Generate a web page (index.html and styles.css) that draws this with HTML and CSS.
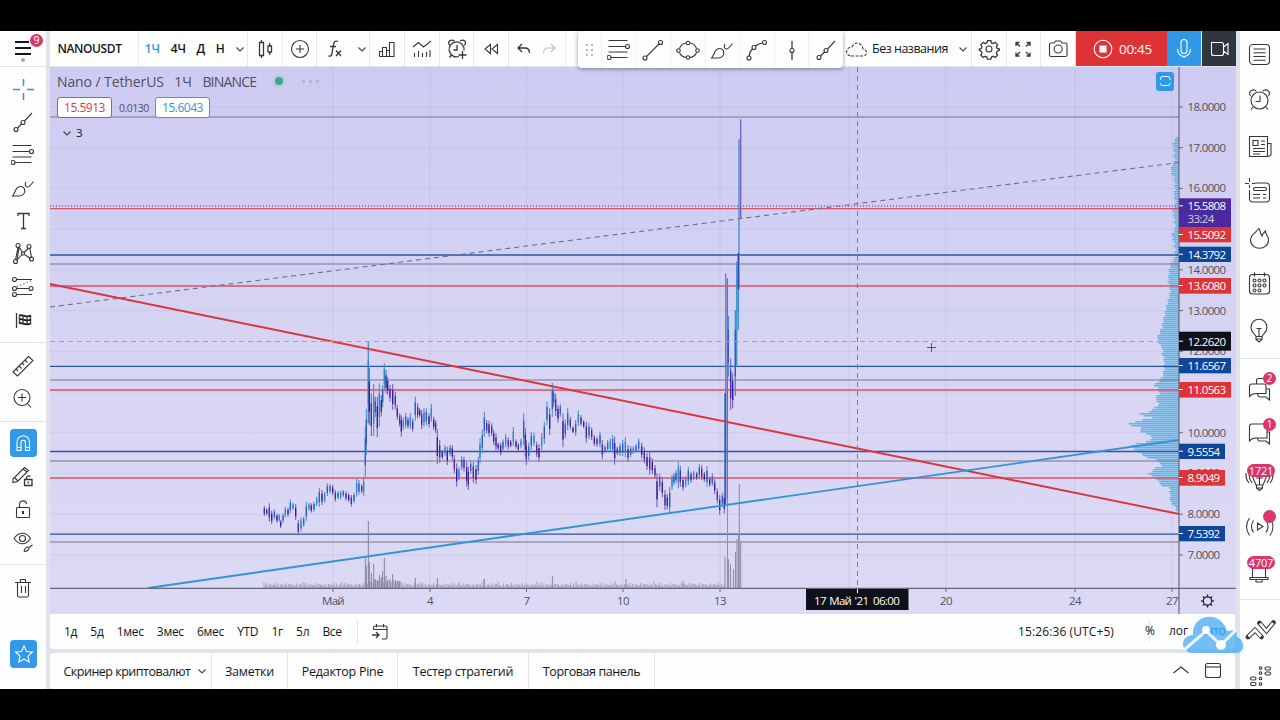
FILE: index.html
```
<!DOCTYPE html>
<html lang="ru">
<head>
  <meta charset="utf-8">
  <title>NANOUSDT</title>
  <link rel="stylesheet" href="styles.css">
</head>
<body>
  <svg class="defs">
    <symbol id="chev" viewBox="0 0 10 10"><path d="M1.5 3.5 5 7l3.5-3.5"/></symbol>
    <symbol id="fib" viewBox="0 0 24 24"><path d="M1.500 2.500h19M1.500 8.500h17M1.500 14h19M4 19.500h16.500"/><circle cx="20.500" cy="8.500" r="2"/><circle cx="2" cy="19.500" r="2"/></symbol>
    <symbol id="ray" viewBox="0 0 24 24"><path d="M6.500 18 10.500 14M13.500 11 21 3"/><circle cx="5" cy="19.500" r="2"/><circle cx="12" cy="12.500" r="2"/></symbol>
    <symbol id="brush" viewBox="0 0 24 24"><path d="M1.500 20C3.500 17.500 4 15.500 5 13.500c2-4 7-4 8.500-.5 1 3.500-1 7-5 7zM15 6c-1.500 2.500-.5 5.500 2 5 1.500-.3 3.500-3 5.500-5.500"/></symbol>
  </svg>

  <div class="app">
    <nav class="left">
      <div class="menu">
        <svg class="ic" viewBox="0 0 24 24"><path class="thick" d="M4 6h14M4 12h16M4 18h16"/></svg>
        <i class="dot"></i><b class="badge">9</b>
      </div>
      <div class="tools">
        <svg class="ic cyan" viewBox="0 0 24 24"><path d="M12.500 2v7M12.500 16v7M2 12.500h7M16 12.500h7"/></svg>
        <svg class="ic"><use href="#ray"/></svg>
        <svg class="ic"><use href="#fib"/></svg>
        <svg class="ic"><use href="#brush"/></svg>
        <svg class="ic" viewBox="0 0 24 24"><path class="med" d="M7 7V4.500h11V7M12.500 4.500v15M10 19.500h5"/></svg>
        <svg class="ic" viewBox="0 0 24 24"><path d="M7 5.500 4.500 18M8.500 5.500l3 5M18 6l-5 4.500M19 7l1.500 9M5.500 18.500 11 12.500M13.500 12.500l6 4M8 6l-2 12"/><circle cx="7" cy="3.500" r="2"/><circle cx="18" cy="4.500" r="2"/><circle cx="4.500" cy="19.500" r="2"/><circle cx="20.500" cy="17" r="2"/><circle cx="12" cy="11.500" r="1.500"/></svg>
        <svg class="ic" viewBox="0 0 24 24"><path d="M5.500 4.500H21M5.500 13.500H18M5.500 19.500H21"/><path stroke-dasharray="1 2.500" d="M6 11.500 20 6"/><circle cx="3.500" cy="4.500" r="2"/><circle cx="3.500" cy="13.500" r="2"/><circle cx="20" cy="13.500" r="2"/><circle cx="3.500" cy="19.500" r="2"/></svg>
        <svg class="ic" viewBox="0 0 24 24"><path class="med" d="M5.500 5V20"/><path class="thick" d="M8 7.500c3-2 6 3 12 0M8 11.500c3-2 6 3 12 0M8 15.500c3-2 6 3 12 0"/><path class="med" d="M8.500 7v9M19.500 7v9M12 7v8.500M16 8v8"/></svg>
      </div>
      <div class="tools">
        <svg class="ic" viewBox="0 0 24 24"><path d="M2 18 17.500 2.500l4.500 4L6.500 22zM5 15l2 2M8 12l2.500 2.500M11 9l2 2M14 6l2.500 2.500"/></svg>
        <svg class="ic" viewBox="0 0 24 24"><circle cx="11" cy="10.500" r="8"/><path d="M7 10.500h8M11 6.500v8M16.500 16.500 20 20.500"/></svg>
      </div>
      <div class="tools">
        <div class="on"><svg class="ic" viewBox="0 0 24 24"><path d="M6 19.500v-8c0-9 12.500-9 12.500 0v8h-4v-8c0-3-4.500-3-4.500 0v8zM6 16.500h4M14.500 16.500h4"/></svg></div>
        <svg class="ic" viewBox="0 0 24 24"><path d="M2 15 13.500 3.500l4 3L6.500 17.500 2 18.500zM12 5l4 3M4 14l3 3"/><path class="med" d="M13.500 15.500h7.500v6h-7.500zM15.500 15.500v-2c0-2 3.500-2 3.500-.5M17.300 17.500v2"/></svg>
        <svg class="ic" viewBox="0 0 24 24"><rect x="5.500" y="10.500" width="13" height="10" rx="1"/><path d="M8.500 10.500v-3c0-5 7-4.500 7-.5"/><path class="thick" d="M12 14v3"/></svg>
        <svg class="ic" viewBox="0 0 24 24"><path d="M3 8.500c5-7 12-7 16.500 0-4.500 7-11.500 7-16.500 0zM13 21.500c1-4 3-5 5-4 0 3-2 4-5 4M18.500 17l3-2"/><circle cx="11.500" cy="8.500" r="3"/></svg>
      </div>
      <div class="tools">
        <svg class="ic" viewBox="0 0 24 24"><path d="M4 6.500h16M6.500 6.500v13c0 1 .5 1.500 1.500 1.500h8c1 0 1.500-.5 1.500-1.500v-13M9.500 6V3.500h5V6M10.500 10v7M14.500 10v7"/></svg>
      </div>
      <div class="on fav"><svg class="ic" viewBox="0 0 24 24"><path d="m12 4 2.500 5.500 6 .7-4.500 4 1.200 6L12 17l-5.200 3.200 1.200-6-4.500-4 6-.7z"/></svg></div>
    </nav>

    <main>
      <header class="top">
        <div class="cell sym">NANOUSDT</div>
        <div class="cell tf"><span class="cur">1Ч</span><span>4Ч</span><span>Д</span><span>Н</span><svg class="ch"><use href="#chev"/></svg></div>
        <div class="cell"><svg class="ic" viewBox="0 0 24 24"><path class="med" d="M6.500 5.500h4v13h-4zM8.500 3v2.500M8.500 18.500V21M15 9h3.500v6H15zM16.700 6v3M16.700 15v3"/></svg></div>
        <div class="cell"><svg class="ic" viewBox="0 0 24 24"><circle cx="12" cy="12" r="8.500"/><path d="M8 12h8M12 8v8"/></svg></div>
        <div class="cell fx"><svg class="ic" viewBox="0 0 24 24"><path class="med" d="M15 4.500c-3-1-4 0-4.500 3l-1.500 9c-.5 2.500-1.500 3-3.500 2.500M7 9.500h6M13 13.500l5 5.500M18 13.500l-5 5.500"/></svg><svg class="ch"><use href="#chev"/></svg></div>
        <div class="cell"><svg class="ic" viewBox="0 0 24 24"><path d="M4.500 19.500v-5h3v5M7.500 19.500v-9h4v9M11.500 13.500h3v6M14.500 19.500V5.500h4.500v14H4.500"/></svg></div>
        <div class="cell"><svg class="ic" viewBox="0 0 24 24"><path d="M3 10 8.500 5.500l5 4.500L21 4M4.500 20v-4M8.500 20v-6M12.500 20v-4M16.500 20v-5M20 20v-7"/></svg></div>
        <div class="cell"><svg class="ic" viewBox="0 0 24 24"><path class="med" d="M14 19.500a7.500 7.500 0 1 1 5-6M4.500 8.500c-2.500-5 2-6.500 5-4.500M15 4c3-2 7.500 0 4.500 4.500M12 8v5H8.500M6.500 18l-2 2.500M17.500 14v8M13.500 18h8"/></svg></div>
        <div class="cell"><svg class="ic" viewBox="0 0 24 24"><path d="M11.500 7.500v9L6 12zM18.500 7.500v9L13 12z"/></svg></div>
        <div class="cell undo"><svg class="ic" viewBox="0 0 24 24"><path class="med" d="m10 7-4 4 4 4M6 11h7c3 0 4.500 2 4.500 5"/></svg><svg class="ic dim" viewBox="0 0 24 24"><path d="m14 7 4 4-4 4M18 11h-7c-3 0-4.500 2-4.500 5"/></svg></div>
        <div class="gap"></div>
        <div class="cell cloud"><svg class="ic" viewBox="0 0 24 24"><path stroke-dasharray="3 1.500" d="M6 19h13c4-1 3-7-1-7-1-7-9-8-11-2C1 10-1 18 6 19z"/></svg><span>Без названия</span><svg class="ch"><use href="#chev"/></svg></div>
        <div class="cell"><svg class="ic" viewBox="0 0 24 24"><circle cx="12" cy="12" r="3"/><path class="med" d="M10.300 3.500h3.400l.6 2.300 1.700.7 2-1.200 2.400 2.400-1.200 2 .7 1.700 2.300.6v1l-2.300 1.300-.7 1.700 1.200 2-2.400 2.300-2-1.100-1.700.7-.6 2.200h-3.400l-.6-2.200-1.700-.7-2 1.100L3.600 18l1.200-2-.7-1.700-2-1.300v-1l2-.6.7-1.700-1.200-2L6 5.300l2 1.200 1.700-.7z" transform="translate(.2 .1)"/></svg></div>
        <div class="cell"><svg class="ic" viewBox="0 0 24 24"><path class="med" d="M5 9V5.500h3.500M5 5.500l4 4M15.500 5.500H19V9M19 5.500l-4 4M5 15.500V19h3.500M5 19l4-4M15.500 19H19v-3.500M19 19l-4-4"/></svg></div>
        <div class="cell"><svg class="ic" viewBox="0 0 24 24"><path d="M3.500 7.500c0-1 .5-1.500 1.500-1.500h3l1.500-2h5L16 6h3.500c1 0 1.500.5 1.500 1.500V18c0 1-.5 1.500-1.500 1.500H5c-1 0-1.500-.5-1.500-1.500z"/><circle cx="12.200" cy="12" r="4"/></svg></div>
        <div class="rec"><svg class="ic" viewBox="0 0 24 24"><circle cx="12" cy="12" r="8.800"/><rect class="solid" x="9" y="9" width="6" height="6"/></svg><span>00:45</span></div>
        <div class="mic"><svg class="ic" viewBox="0 0 24 24"><rect x="9" y="2.500" width="6" height="14" rx="3"/><path d="M5.500 12c0 10 13 10 13 0M12 19.500V21"/></svg></div>
        <div class="cam"><svg class="ic" viewBox="0 0 24 24"><path d="M4.500 5.500h10c1.500 0 2 .5 2 2v9c0 1.500-.5 2-2 2h-8c-1.500 0-2-.5-2-2zM16.500 10l4.500-3.500v11L16.500 14"/></svg></div>

        <div class="float">
          <div class="grip"><i></i><i></i><i></i><i></i><i></i><i></i></div>
          <div><svg class="ic"><use href="#fib"/></svg></div>
          <div><svg class="ic" viewBox="0 0 24 24"><path d="M5.500 18.500 18.500 5.500"/><circle cx="4" cy="20" r="2"/><circle cx="19.500" cy="4.500" r="2"/></svg></div>
          <div><svg class="ic" viewBox="0 0 24 24"><path d="M3.500 10.500C4.500 7.500 7 5.500 10 5M14 5c3 .5 5.500 2.500 6.500 5.500M3.500 14.500c1 3 3.500 4.500 6.500 5M14 19.500c3-.5 5.500-2 6.500-5"/><circle cx="12" cy="5" r="1.800"/><circle cx="12" cy="19.500" r="1.800"/><circle cx="2.500" cy="12.500" r="1.800"/><circle cx="21.500" cy="12.500" r="1.800"/></svg></div>
          <div><svg class="ic"><use href="#brush"/></svg></div>
          <div><svg class="ic" viewBox="0 0 24 24"><path d="M4.200 18c.2-3 1-5 3.300-7M10.500 8c2-1.500 4-2.500 7-3"/><circle cx="4" cy="20" r="2"/><circle cx="9" cy="9.500" r="2"/><circle cx="19.500" cy="4.500" r="2"/></svg></div>
          <div><svg class="ic" viewBox="0 0 24 24"><path class="med" d="M12 3v7.500M12 14.500V22"/><circle cx="12" cy="12.500" r="2"/></svg></div>
          <div><svg class="ic"><use href="#ray"/></svg></div>
        </div>
      </header>

      <section class="chart">
        <svg id="plot" width="1186" height="547" viewBox="50 67 1186 547"></svg>
        <div class="legend">
          <div class="name"><span>Nano / TetherUS</span><span>1Ч</span><span class="exch">BINANCE</span><i class="live"></i><em><i></i><i></i><i></i></em></div>
          <div class="quote"><span class="bid">15.5913</span><small>0.0130</small><span class="ask">15.6043</span></div>
          <div class="fold"><svg class="ch"><use href="#chev"/></svg>3</div>
        </div>
        <div class="max"><svg viewBox="0 0 18 18"><path d="M4.500 8V6.500q0-2 2-2h5.500q2 0 2 2V8M14 11v.500q0 2-2 2H6.500q-2 0-2-2V11"/></svg></div>
      </section>

      <div class="range">
        <div class="spans"><span>1д</span><span>5д</span><span>1мес</span><span>3мес</span><span>6мес</span><span>YTD</span><span>1г</span><span>5л</span><span>Все</span></div>
        <div class="goto"><svg class="ic" viewBox="0 0 24 24"><path d="M5.500 9.500v-2c0-1 .5-1.500 1.500-1.500h10.500c1 0 1.500.5 1.500 1.500v10c0 1-.5 1.500-1.500 1.500H14M5.500 9.500h13.500M8.500 4v3.500M15.500 4v3.500"/><path class="med" d="M4 15h6.500M8 12l3 3-3 3"/></svg></div>
        <div class="clock">15:26:36 (UTC+5)</div>
        <div class="scale"><span>%</span><span>лог</span><span class="auto">авто</span></div>
      </div>

      <footer class="tabs">
        <div class="tab t1">Скринер криптовалют<svg class="ch"><use href="#chev"/></svg></div>
        <div class="tab t2">Заметки</div>
        <div class="tab t3">Редактор Pine</div>
        <div class="tab t4">Тестер стратегий</div>
        <div class="tab t5">Торговая панель</div>
        <div class="win">
          <svg class="ic" viewBox="0 0 24 24"><path d="m4.500 14 7.500-6 7.500 6"/></svg>
          <svg class="ic" viewBox="0 0 24 24"><rect x="4.500" y="4.500" width="15" height="14" rx="2"/><path d="M4.500 8h15"/></svg>
        </div>
      </footer>
    </main>

    <aside class="right">
      <div class="grp">
        <div><svg class="ic" viewBox="0 0 24 24"><rect x="2.500" y="1.500" width="20" height="20" rx="3.500"/><path d="M6.500 6h12M6.500 9.800h12M6.500 13.500h12M6.500 17.200h12"/></svg></div>
        <div><svg class="ic up" viewBox="0 0 24 24"><circle cx="12.500" cy="13.500" r="8.500"/><path d="M13 8.500v6H8.500M3.500 9c-3-5 3-8 6-4.500M15.500 4.500c3-3.500 9-.5 6 4.500M6 20l-2 2.500M19 20l2 2.500"/></svg></div>
        <div><svg class="ic" viewBox="0 0 24 24"><path d="M2.500 1.500h18v20h-18zM20.500 8.500H24V19.500q-1 2-3.500 2M6 5.500h5v5H6zM14 6h4M14 9.500h4M6 13.500h12M6 16.500h12M6 19h7"/></svg></div>
        <div><svg class="ic" viewBox="0 0 24 24"><path d="M8 2h11q3.500 0 3.500 3.500v12q0 3.500-3.500 3.500H6q-3.500 0-3.500-3.500V9M-2 2.500h4M5 2.500h3M2.500 -3v4M2.500 4v3M6 13.500h7M16 13.500h3M6 17h7M16 17h3"/><rect x="6.500" y="6.500" width="13" height="3" rx="1.500"/></svg></div>
        <div><svg class="ic" viewBox="0 0 24 24"><path d="M12 1.500c1.500 2 1 5 3 7.500.5-2 1-3 3.500-5-.5 3 3 5 3 9 0 11-18 11-18 0C3.500 7.500 9 5.500 12 1.500z"/></svg></div>
        <div><svg class="ic" viewBox="0 0 24 24"><rect x="2.500" y="1.500" width="20" height="19.500" rx="3"/><path class="med" d="M7.500-.5v4M17.500-.5v4"/><circle cx="7.500" cy="7.500" r="1.500"/><circle cx="12.500" cy="7.500" r="1.500"/><circle cx="17.500" cy="7.500" r="1.500"/><circle cx="7.500" cy="12.500" r="1.500"/><circle cx="12.500" cy="12.500" r="1.500"/><circle cx="17.500" cy="12.500" r="1.500"/><circle cx="7.500" cy="17.500" r="1.500"/><circle cx="12.500" cy="17.500" r="1.500"/></svg></div>
        <div><svg class="ic" viewBox="0 0 24 24"><path d="M9 17.500c-1-3-5-4-5-9 0-11 16-11 16 0 0 5-4 6-5 9zM9 17.500v3l3 2.500 3-2.500v-3M9 20h6M12 17.500v-8M9.500 9.500h5"/></svg></div>
      </div>
      <div class="grp">
        <div><svg class="ic" viewBox="0 0 24 24"><path d="M9.500 8V4.500q0-2 2-2H18M5 8h12q2 0 2 2v7.500H9q-4 0-6.500 3V10q0-2 2.500-2zM19.500 13h3v11l-3.500-3h-6q-2 0-2.500-3"/></svg><b class="badge">2</b></div>
        <div><svg class="ic" viewBox="0 0 24 24"><path d="M5 2h13q2 0 2 2v12H9q-4 0-6.500 3V4.500Q2.500 2 5 2zM20 10h2.500v12L19 19h-6q-2 0-2.500-2.500"/></svg><b class="badge">1</b></div>
        <div><svg class="ic" viewBox="0 0 24 24"><path d="M5 4c0 6 3 10 4 13h7c1-3 4-7 4-13M9.500 17v3l3 2.500 3-2.500v-3M9.500 20h6M12.500 17V5M9 10h7M2 6q0 5 3 9M-1 5q-.5 6 3 10M23 6q0 5-3 9M26 5q.5 6-3 10"/></svg><b class="badge wide">1721</b></div>
        <div><svg class="ic" viewBox="0 0 24 24"><path d="M10.500 9v7l5.500-3.500zM6.500 6.500q-4 6 0 12M2.500 4q-6 8.500 0 17.500M19 6.500q4 6 0 12M23 4q6 8.500 0 17.500"/></svg><b class="badge blank"></b></div>
        <div><svg class="ic" viewBox="0 0 24 24"><path d="M5.500 4v13.500h13V4M3 17.500h18v2H3zM9 19.500v2.500h6v-2.500"/></svg><b class="badge wide">4707</b></div>
      </div>
      <div class="grp">
        <div><svg class="ic" viewBox="0 0 24 24"><path class="rim" d="m1 20 7-7 6.500 7M12.500 6l7 8 7-8.500"/><path class="core" d="m1.500 19.500 6.500-6.500 6 6.500M13 6.500l6.500 7.500 6.500-8"/></svg></div>
        <div><svg class="ic" viewBox="0 0 24 24"><rect x="3.500" y="14" width="5.500" height="3" rx="1.500"/><rect x="3.500" y="19.500" width="5.500" height="3" rx="1.500"/><rect x="18" y="4" width="5.500" height="3" rx="1.500"/><rect x="18" y="9" width="5.500" height="3" rx="1.500"/><circle cx="13.500" cy="5" r="1.300"/><circle cx="13.500" cy="10" r="1.300"/><circle cx="13.500" cy="15.500" r="1.300"/><circle cx="13.500" cy="21" r="1.300"/></svg></div>
      </div>
    </aside>
    <svg class="mark" viewBox="0 0 62 38"><path class="puff" d="M12 37C-2 37-3 20 11 19 9-2 39-7 45 15l9-1 1 7c9 4 8 16-1 16z"/><path class="zig" d="M2 34 24 15l15 14L54 14"/><circle cx="24" cy="14" r="4"/><circle cx="39" cy="29" r="5"/></svg>
  </div>
  <script src="chart.js"></script>
</body>
</html>
```
FILE: styles.css
```
* { box-sizing: border-box; }
body {
  margin: 0;
  background: #000;
  font: 12.5px "Trebuchet MS", "Open Sans", "Noto Sans", sans-serif;
  color: #131722;
}
.defs { display: none; }

.app {
  position: relative;
  display: flex;
  width: 1280px; height: 720px;
  padding: 31px 0;
  overflow: hidden;
}
.app > * { height: 658px; }

.ic {
  width: 24px; height: 24px;
  flex: none;
  overflow: visible;
  fill: none;
  stroke: #34373e;
  stroke-width: 1.1;
}
.ch {
  width: 10px; height: 10px;
  flex: none;
  fill: none;
  stroke: #43464d;
  stroke-width: 1.1;
}
.med { stroke-width: 1.3; }
.thick { stroke-width: 1.8; stroke: #131722; }
.cyan { stroke: #2b9cc9; stroke-width: 1.5; }
.dim { stroke: #bbb; }
.solid { fill: #fff; }
.rim { stroke-width: 4.6; stroke-linecap: round; }
.core { stroke-width: 2.6; stroke: #fefefe; }

/* left tools */
.left {
  width: 46px;
  background: #fefefe;
}
.menu {
  position: relative;
  height: 36px;
  padding: 5px 11px;
  border-bottom: 1px solid #e0e3eb;
}
.dot {
  position: absolute;
  left: 21px; top: 27px;
  width: 4px; height: 4px;
  border-radius: 50%;
  background: #aaa;
}
.badge {
  position: absolute;
  top: 3px; right: 3px;
  min-width: 13px; height: 13px;
  padding: 0 3px;
  border-radius: 7px;
  background: #d9366b;
  color: #fff;
  font-weight: 400;
  font-size: 10.5px;
  line-height: 13px;
  text-align: center;
}
.tools {
  display: flex;
  flex-direction: column;
  align-items: center;
  gap: 9px;
  padding: 10px 0;
  border-bottom: 1px solid #e0e3eb;
}
.tools:nth-child(3) { padding-top: 11px; }
.tools:nth-child(4) { padding-top: 9px; }
.tools:nth-child(5) { padding-top: 11px; border: 0; }
.on {
  display: flex;
  justify-content: center;
  align-items: center;
  width: 27px; height: 28px;
  margin: -2px 0;
  border-radius: 4px;
  background: #3298e8;
}
.on .ic { stroke: #fff; }
.fav { margin: 30px 10px; }

/* middle column */
main {
  display: flex;
  flex-direction: column;
  width: 1194px;
  padding: 0 4px 0 4px;
  background: #e0e3eb;
}
.top {
  position: relative;
  display: flex;
  height: 36px;
  background: #e3e5eb;
}
.cell {
  display: flex;
  align-items: center;
  justify-content: center;
  width: 34.7px; height: 35px;
  border-right: 1px solid #e6e8ed;
  background: #fefefe;
}
.sym {
  width: 89px;
  padding-right: 9px;
  font-weight: 600;
  font-size: 12px;
  letter-spacing: -.4px;
}
.tf {
  width: 109px;
  gap: 10.5px;
  padding-left: 4px;
  font-weight: 600;
  font-size: 12px;
}
.cur { color: #3298d8; }
.fx { width: 53px; gap: 10px; padding-left: 3px; }
.undo { width: 57px; gap: 1px; padding-right: 2px; }
.gap { flex: 1; height: 35px; background: #fefefe; }
.cloud {
  width: 130px;
  gap: 3px;
  font-size: 12.5px;
  letter-spacing: -.5px;
}
.cloud .ch { margin-left: 7px; }
.rec, .mic, .cam {
  display: flex;
  align-items: center;
  justify-content: center;
  height: 35px;
  color: #fff;
}
.rec { width: 91px; gap: 4px; background: #de3336; font-size: 13.5px; letter-spacing: -.3px; }
.mic { width: 34px; background: #3298e8; }
.cam { width: 34px; margin-left: 1px; background: #2f3640; }
.rec .ic, .mic .ic, .cam .ic { stroke: #fff; }

.float {
  position: absolute;
  left: 528px; top: 0;
  z-index: 2;
  display: flex;
  width: 265px; height: 37px;
  border-radius: 4px;
  background: #fefefe;
  box-shadow: 0 1px 4px rgba(0, 0, 0, .4);
}
.float > div {
  display: flex;
  align-items: center;
  justify-content: center;
  width: 34.700px;
  border-left: 1px solid #f0f1f4;
}
.float .grip {
  width: 23px;
  flex-wrap: wrap;
  align-content: center;
  gap: 3px;
  padding: 0 7px;
  border: 0;
}
.grip i { width: 2px; height: 2px; background: #b5b8c0; }

.chart {
  position: relative;
  width: 1186px; height: 547px;
  background: linear-gradient(#cdcbf1, #d8d6f3 60%, #dbd9f4);
}
#plot { display: block; }
#plot text { font-size: 11.5px; letter-spacing: -.65px; word-spacing: 1px; fill: #50535e; }
#plot .lbl { fill: #fff; }
#plot .mid { text-anchor: middle; }
.legend {
  position: absolute;
  left: 7px; top: 4px;
}
.name {
  display: flex;
  align-items: center;
  gap: 10.5px;
  height: 20px;
  font-size: 14px;
  letter-spacing: -.1px;
  color: #50505f;
}
.exch { letter-spacing: -.8px; }
.live {
  width: 8px; height: 8px;
  margin-left: 8px;
  border-radius: 50%;
  background: #43a08c;
  box-shadow: 0 0 0 3px #b4cfe0;
}
.name em { display: flex; gap: 4px; margin-left: 9px; }
.name em i { width: 3px; height: 3px; border-radius: 50%; background: #b1afcb; }
.quote {
  display: flex;
  align-items: center;
  gap: 7px;
  margin-top: 6px;
}
.bid, .ask {
  width: 55px; height: 21px;
  border: 1px solid #d94a5a;
  border-radius: 3px;
  background: #fefefe;
  color: #d23c4a;
  font-size: 12px;
  letter-spacing: -.5px;
  line-height: 19px;
  text-align: center;
}
.ask { margin-left: -1px; border-color: #3c9be0; color: #3298d8; }
.quote small { width: 30px; font-size: 10.5px; letter-spacing: -.5px; color: #50535e; }
.fold {
  display: flex;
  align-items: center;
  gap: 4px;
  padding: 7px 0 0 5px;
  font-size: 11.5px;
}
.max {
  position: absolute;
  left: 1106px; top: 5px;
  width: 18px; height: 19px;
  border-radius: 3px;
  background: #3298e8;
}
.max svg { display: block; width: 18px; height: 18px; fill: none; stroke: #fff; }

.range {
  display: flex;
  align-items: center;
  height: 35px;
  margin-right: 1px;
  padding-left: 14px;
  border-radius: 0 0 3px 3px;
  background: #fefefe;
  font-size: 12px;
}
.spans { display: flex; gap: 13.2px; width: 293px; letter-spacing: -.3px; }
.goto {
  display: flex;
  padding-left: 10px;
  border-left: 1px solid #e0e3eb;
}
.clock { margin-left: auto; padding-right: 35px; letter-spacing: .1px; }
.scale {
  display: flex;
  gap: 13px;
  width: 86px; height: 21px;
  line-height: 20px;
  border-left: 1px solid #e0e3eb;
}
.scale span:first-child { margin-left: -5px; }
.scale span + span { margin-left: 1px; }
.scale .auto { margin-left: -1px; color: #0c62ad; letter-spacing: -.3px; }

.tabs {
  display: flex;
  height: 36px;
  margin: 4px 1px 0 0;
  border-radius: 3px;
  background: #fefefe;
  font-size: 12.5px;
  line-height: 35px;
  letter-spacing: -.25px;
  white-space: nowrap;
}
.tab {
  display: flex;
  align-items: center;
  justify-content: center;
  border-right: 1px solid #e0e3eb;
}
.t1 { width: 162px; gap: 7px; padding-left: 10px; letter-spacing: -.5px; }
.t2 { width: 76px; }
.t3 { width: 110px; }
.t4 { width: 131px; }
.t5 { width: 126px; letter-spacing: -.4px; }
.win { display: flex; align-items: center; gap: 8px; margin: 0 10px 0 auto; }

/* right widgets */
.right {
  width: 40px;
  padding-top: 1px;
  background: #fefefe;
}
.grp { padding-bottom: 4px; border-bottom: 1px solid #e0e3eb; }
.grp + .grp { padding-top: 6px; }
.grp div {
  position: relative;
  height: 46px;
  padding: 11px 0 0 7px;
}
.grp:last-child { border: 0; }
.grp .up { margin-top: -2px; }
.grp .badge { top: 7px; right: 4px; }
.grp .wide {
  top: 7px; right: 5px;
  width: 28px;
  padding: 0;
  font-size: 11px;
  letter-spacing: -.2px;
}
.grp .blank { top: 7px; }

.mark {
  position: absolute;
  left: 1182px; top: 616px;
  width: 62px; height: 38px;
}
.app > .mark { height: 38px; }
.puff { fill: #3fa5f2; fill-opacity: .72; }
.zig { fill: none; stroke: #fff; stroke-width: 3; stroke-opacity: .85; }
.mark circle { fill: #fff; }
```
FILE: chart.js
```
const plot = document.getElementById("plot");
const add = (tag, attrs, text) => {
  const el = document.createElementNS("http://www.w3.org/2000/svg", tag);
  for (const k in attrs) el.setAttribute(k, attrs[k]);
  if (text) el.textContent = text;
  plot.appendChild(el);
  return el;
};
const line = (x1, y1, x2, y2, stroke, w = 1, dash = "none") =>
  add("line", { x1, y1, x2, y2, stroke, "stroke-width": w, "stroke-dasharray": dash });

const RIGHT = 1179, BASE = 588;
const priceY = p => 107 + (18 - p) * 40.72;

// grid
for (let p = 7; p <= 18; p++) line(50, priceY(p), RIGHT, priceY(p), "rgba(175,130,185,.15)");
[333, 430, 526.5, 623, 720, 849, 946, 1075, 1172].forEach(x =>
  line(x, 67, x, BASE, "rgba(150,130,180,.15)"));

// volume by price: y, width
const profile = [
  [135,1],[140,5],[145,6],[150,5],[155,5],[160,4],[165,7],[171.5,8],[176.500,5],[187,4],[195,5],[203,4],
  [210,6],[217,5],[227,4],[235,7],[241,5],[248,4],[257,4],[263,8],[270,10],[280,11],[287,9],[293,9],
  [300,11],[307,13],[313,14],[320,16],[327,17],[333,20],[338,22],[343,20],[348,16],[353,17],[358,15],
  [363,15],[370,15],[377,17],[382,22],[385,25],[388,20],[393,20],[398,24],[403,20],[408,25],[411.500,32],
  [413.500,41],[417,28],[420,40],[423.500,53],[427,38],[430,40],[433,33],[437,26],[440,30],[444.500,48],
  [448,45],[452,40],[457,32],[460,20],[465,18],[468,25],[473,30],[477,25],[480,20],[484,20],[487,10],
  [493,9],[500,9],[505,5],[510,2]];
for (let y = 135, i = 0; y < 512; y += 2) {
  while (i < profile.length - 2 && profile[i + 1][0] < y) i++;
  const [a, wa] = profile[i], [b, wb] = profile[i + 1];
  const w = wa + (wb - wa) * (y - a) / (b - a) + ((y * 7) % 3 - 1) * .8;
  add("rect", { x: RIGHT - w, y, width: w, height: 1.5, fill: "#5fb5ea" });
  add("rect", { x: RIGHT - w * .8, y: y + 1.5, width: w * .8, height: .5, fill: "#8cc6ec" });
}

// levels
[117, 264, 380, 461, 542].forEach(y => line(50, y, RIGHT, y, "#77768f", 1.2));
[255, 366.3, 451.5, 534.2].forEach(y => line(50, y, RIGHT, y, "#2d55a5", 1.3));
[208.700, 286, 390, 478].forEach(y => line(50, y, RIGHT, y, "#dc5068", 1.3));
line(50, 206, RIGHT, 206, "#4b2a80", 1.2, "1 2");

// candles: x, high, low, each block in its own thirds-of-a-pixel frame
const blocks = [
  [250, 330, "43,528,558 50,535,555 58,520,575 65,542,582 73,538,568 81,550,578 88,552,575 92,570,594 99,550,578 106,530,562 114,533,560 121,508,550 129,518,540 137,522,570 145,570,616 153,562,605 161,560,590 169,516,572 177,518,542 184,520,548 192,515,545 200,500,528 208,474,530 216,480,525 224,485,518 232,460,498 240,462,490 248,465,495 256,480,515 264,483,508 272,482,508 280,480,500 288,484,512 296,490,516 304,495,530 312,488,520 320,446,500 327,450,495 335,462,490 341,440,498 346,290,440 349,236,375 355,36,280 358,115,285 364,190,318 371,162,318 376,200,262 382,200,322 388,160,290 394,195,260 398,165,232 403,100,180 408,120,190 413,140,195 420,165,215 428,162,240 436,185,238 442,225,270 449,250,290 454,255,320 460,262,300 467,248,295 474,262,295 481,250,298 488,265,305 496,200,272 503,220,265 509,235,262 515,240,298 522,235,290 529,235,285 537,250,292 544,222,275 551,260,300 557,270,308 562,298,402 569,330,398 577,360,388 585,345,378 592,350,405 600,345,378 607,345,390 613,375,430 620,400,470 627,410,450 635,378,420 642,380,425 650,395,470 655,410,480 662,392,432 670,395,458 678,405,462 685,380,435 690,325,400 697,300,370 703,245,320 710,270,310 717,272,320 725,280,318 731,300,345 738,310,360 745,340,358"],
  [470, 370, "85,218,240 92,218,256 99,208,244 107,192,232 115,202,238 122,210,232 130,172,228 138,208,236 145,220,244 153,205,235 161,130,225 166,175,258 169,210,286 176,218,270 184,185,240 192,188,228 200,215,262 207,222,275 215,190,240 223,155,222 231,95,165 239,115,195 247,38,140 251,55,110 257,72,138 264,105,158 271,102,140 279,130,232 286,148,205 293,115,180 301,140,178 309,168,190 317,150,198 325,122,168 333,135,168 341,150,175 349,155,218 357,158,208 365,172,210 373,195,228 381,200,230 390,185,232 397,210,268 405,225,250 413,210,245 421,205,245 428,195,250 434,200,284 442,230,255 450,220,258 458,210,258 466,202,262 474,225,276 482,228,262 490,228,252 498,222,248 506,205,245 515,218,265 523,232,280 531,250,300 539,245,315 547,265,312 555,285,325 561,310,412 569,310,362 577,322,382 585,360,420 592,372,418 599,350,430"],
  [630, 110, "126,1095,1140 132,1090,1125 138,1080,1120 145,1055,1135 151,1068,1130 159,1100,1142 167,1098,1132 175,1070,1125 183,1085,1118 191,1082,1110 200,1085,1110 208,1062,1105 215,1066,1110 223,1085,1115 231,1068,1130 239,1100,1130 247,1090,1128 254,1108,1152 262,1135,1180 269,1155,1214 277,1148,1190 283,1150,1210 285,850,1150 287,490,1060 292,505,1180 295,618,800 302,745,900 308,790,895 316,600,858 320,455,770 325,430,660 327,88,540 332,28,325"]
];
let prev = 510;
blocks.forEach(([ox, oy, data]) => data.split(" ").forEach((c, i) => {
  const [px, ph, pl] = c.split(",").map(Number);
  const x = ox + px / 3, hi = oy + ph / 3, lo = oy + pl / 3;
  const mid = (hi + lo) / 2, last = px === 332 && ox === 630, up = mid <= prev && !last;
  prev = mid;
  const len = lo - hi;
  line(x, hi, x, lo, up ? "#4a90cf" : "#7a62bf", len > 60 ? 1.4 : 1.1);
  if (len > 95) return;
  const h = len * .27;
  line(x, mid - h, x, mid + h, up ? (i % 3 ? "#2f5cc0" : "#2a88cc") : (i % 2 ? "#3a1a9a" : "#4c2a9c"), 1.35);
}));
line(725.300, 393, 725.300, 505, "#2a50b8", 1.2);
line(738.300, 253, 738.300, 289, "#2a3cb0", 1.2);

// volume by time
const peaks = { 346:30, 349:22, 355:67, 358:26, 364:15, 371:24, 376:9, 382:8, 388:13, 394:11, 398:17, 403:30,
  408:12, 413:8, 420:9, 428:14, 436:8, 442:7, 449:7, 496:10, 562:10, 703:9 };
for (let x = 264, i = 0; x < 724; x += 1.345, i++) {
  const near = x > 366 && x < 402 ? 3 : 0;
  const h = 1.5 + near + (i * 37 % 11) / 4 + (i % 2 ? 0 : 1.2) + (i % 29 === 0 ? 3 : 0);
  line(x, BASE - h, x, BASE, "#9c9bb2", .9);
}
for (const k in peaks) line(250 + k / 3, BASE - peaks[k], 250 + k / 3, BASE, "#85849a", 1);
[[552.500,12],[484,9],[626,9],[683,7],[725,31],[727.500,89],[728.500,29],[730.500,24],[733.500,19],[735.500,36],
  [737,49],[738.500,55],[739.300,104],[740.700,47]].forEach(([x, h]) =>
  line(x, BASE - h, x, BASE, "#9190a6", 1.1));

// trend lines
line(50, 307, 1179, 162.500, "#706f8a", 1.1, "5 4");
line(50, 284, 1179, 514, "#da353f", 1.9);
line(148, 588, 1179, 440, "#3493d6", 1.9);

// crosshair
line(50, 341.5, RIGHT, 341.5, "#a09fb8", 1, "5 4");
line(857.500, 67, 857.500, BASE, "#7c7b96", 1, "5 4");
add("path", { d: "M927 347.500h9M931.500 343v9", stroke: "#555468", fill: "none" });

// axes
line(50, BASE + .3, 1236, BASE + .3, "#686778", 1.2);
line(RIGHT, 67, RIGHT, 614, "#686778", 1.2);
for (let p = 7; p <= 18; p++) {
  line(RIGHT, priceY(p), 1183, priceY(p), "#686778");
  if (p !== 11 && p !== 15) add("text", { x: 1187.500, y: priceY(p) + 4 }, p + ".0000");
}
[[333, "Май"], [430, "4"], [526.5, "7"], [623, "10"], [720, "13"], [946, "20"], [1075, "24"], [1172, "27"]]
  .forEach(([x, t]) => {
    line(x, BASE, x, 592, "#686778");
    add("text", { x, y: 605, class: "mid" }, t);
  });

const tag = (y, h, w, fill, text) => {
  add("rect", { x: RIGHT, y, width: w, height: h, fill });
  line(RIGHT, y + 7.5, 1183, y + 7.5, "#fff");
  add("text", { x: 1187.500, y: y + 12, class: "lbl" }, text);
};
tag(198.3, 28.7, 52, "#4b2aa0", "15.5808");
add("text", { x: 1187.500, y: 223, class: "lbl", opacity: .75 }, "33:24");
tag(227, 15.3, 52, "#dd3438", "15.5092");
tag(246.7, 15.3, 52, "#0f4698", "14.3792");
tag(278, 15.7, 52, "#dd3438", "13.6080");
add("rect", { x: RIGHT, y: 331.7, width: 52, height: 19, fill: "#0e1119" });
tag(333.7, 15.3, 52, "#0e1119", "12.2620");
tag(358, 15.3, 52, "#0f4698", "11.6567");
tag(382, 15.6, 52, "#dd3438", "11.0563");
tag(443.700, 15.3, 46, "#0f4698", "9.5554");
tag(470, 15.7, 46, "#dd3438", "8.9049");
tag(526, 15.3, 46, "#0f4698", "7.5392");

add("rect", { x: 806, y: 589, width: 102.500, height: 21, fill: "#0e1119" });
line(857.500, 589, 857.500, 593, "#fff");
add("text", { x: 814, y: 605, class: "lbl" }, "17 Май '21");
add("text", { x: 873, y: 605, class: "lbl" }, "06:00");

// axis settings
add("circle", { cx: 1207.500, cy: 601, r: 4.2, fill: "none", stroke: "#22242c", "stroke-width": 1.2 });
for (let a = 0; a < 8; a++) {
  const c = Math.cos(a * Math.PI / 4), s = Math.sin(a * Math.PI / 4);
  line(1207.500 + c * 4.200, 601 + s * 4.200, 1207.500 + c * 6.500, 601 + s * 6.500, "#22242c", 1.3);
}
```
